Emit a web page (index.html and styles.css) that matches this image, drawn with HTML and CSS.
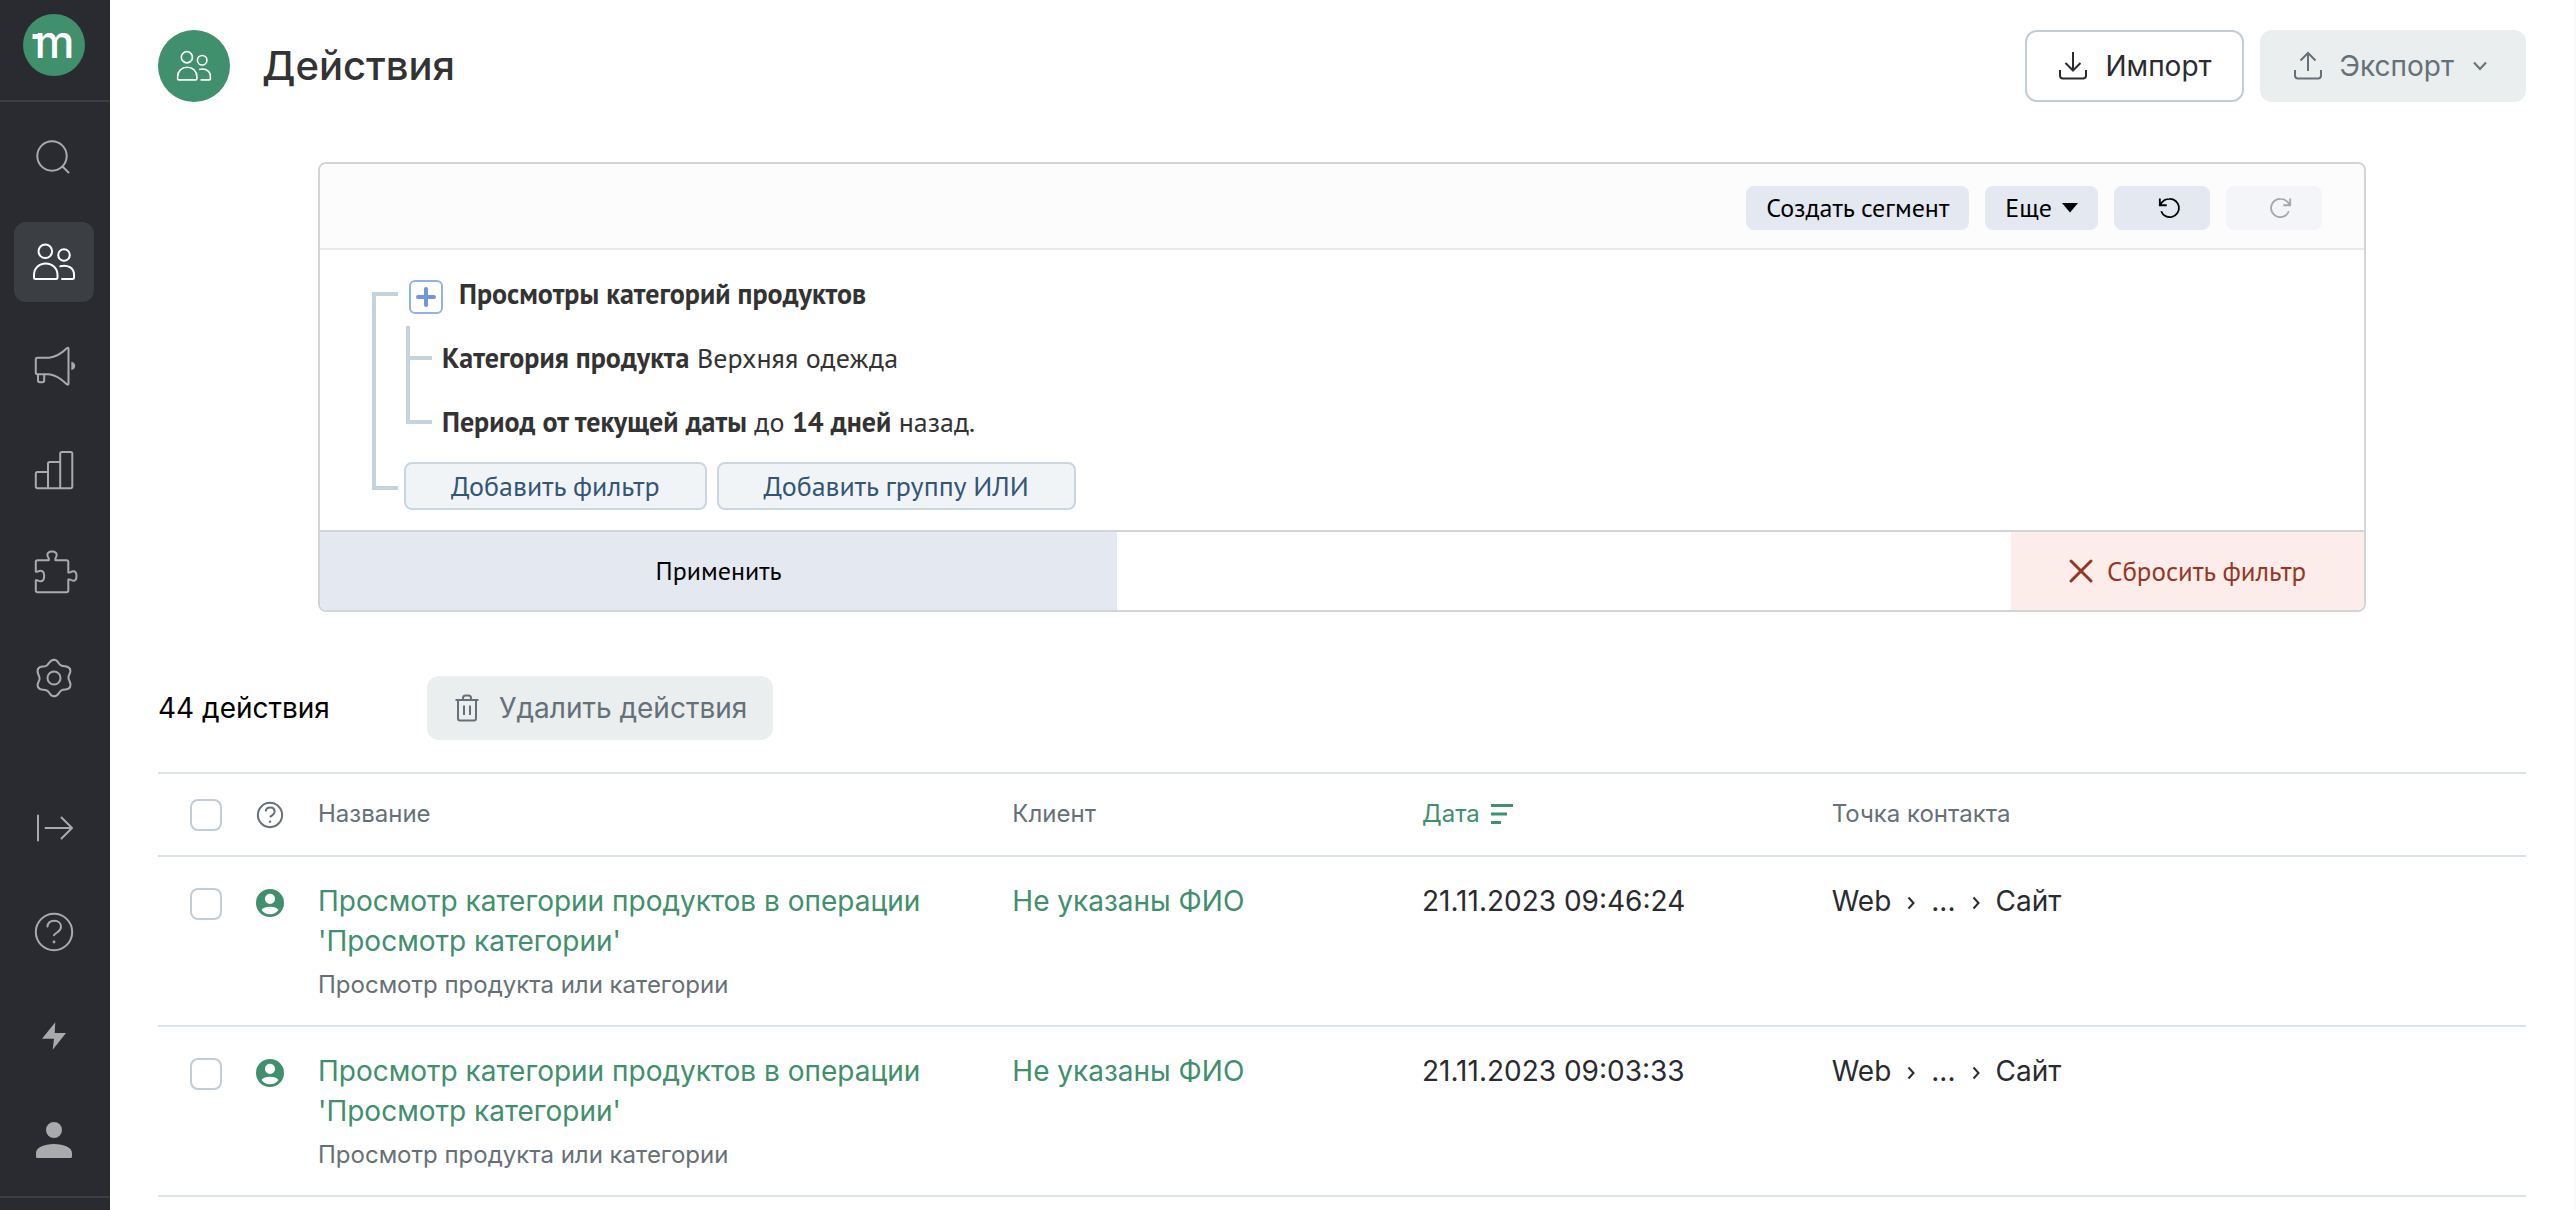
FILE: index.html
```html
<!DOCTYPE html>
<html lang="ru">
<head>
<meta charset="utf-8">
<meta name="viewport" content="width=device-width, initial-scale=1">
<title>Действия</title>
<link rel="stylesheet" href="styles.css">
</head>
<body>
<svg class="sprite" aria-hidden="true">
  <symbol id="i-users" viewBox="0 0 44 44">
    <circle cx="13.3" cy="11.3" r="6.8"/><circle cx="32" cy="15" r="5.8"/>
    <path d="M2 35C2 28.500 7 23.500 13.700 23.500S25.500 28.500 25.500 35V37.500Q25.500 39 24 39H3.500Q2 39 2 37.500Z"/>
    <path d="M28.300 26.200C35.500 24.300 42 28 42 34.500V37.500Q42 39 40.500 39H30"/>
  </symbol>
  <symbol id="i-account" viewBox="0 0 28 28">
    <path fill-rule="evenodd" d="M14 0a14 14 0 1 0 0 28a14 14 0 1 0 0-28ZM14 4.700a5 5 0 1 1 0 10.200a5 5 0 1 1 0-10.200ZM5.500 21C7 18.600 10 17.700 14 17.700S21 18.600 22.500 21C20.500 23.800 17.500 25.200 14 25.200S7.500 23.800 5.500 21Z"/>
  </symbol>
</svg>
<div class="app">
  <nav class="sidebar" aria-label="Главное меню">
    <a class="logo" href="#" aria-label="Главная"><svg viewBox="0 0 62 62" width="62" height="62"><circle cx="31" cy="31" r="31"/><rect x="9.500" y="20" width="6" height="5"/><text x="31.500" y="44" text-anchor="middle">m</text></svg></a>
    <div class="nav-group">
      <a class="nav-item" href="#" aria-label="Поиск"><svg viewBox="0 0 44 44"><circle cx="20" cy="20" r="14.700"/><path d="M30.500 30.500L36.500 36.500"/></svg></a>
      <a class="nav-item active" href="#" aria-label="Клиенты"><svg><use href="#i-users"/></svg></a>
      <a class="nav-item" href="#" aria-label="Кампании"><svg viewBox="0 0 44 44"><path d="M5.500 13.800H17C25 13 31 8 34.800 4.300Q36.500 2.800 36.500 5V39.500Q36.500 41.500 34.800 40.200C31 36.500 25 31 17 30.200H5.500Q3.800 30.200 3.800 28.500V15.500Q3.800 13.800 5.500 13.800ZM6 30.500V36.500Q6 38.300 8 38.300H10.300Q12.200 38.300 12.200 36.500V31"/><path class="solid" d="M39.300 17.800C44.500 18.500 44.500 25.300 39.300 26Z"/></svg></a>
      <a class="nav-item" href="#" aria-label="Отчёты"><svg viewBox="0 0 44 44"><path d="M16 40.300H5.500Q3.800 40.300 3.800 38.500V26Q3.800 24 5.500 24H16M28.200 40.300H16V15.500Q16 14 17.700 14H28.200M28.200 40.300V5.500Q28.200 4 30 4H38.500Q40.300 4 40.300 5.500V38.500Q40.300 40.300 38.500 40.300H16"/></svg></a>
      <a class="nav-item" href="#" aria-label="Интеграции"><svg viewBox="0 0 44 44"><path d="M5.500 8.300H16.800V6.500C13 .500 18-.400 20-.400S27 .500 23.400 6.500V8.300H34.500Q36.300 8.300 36.300 10.100V20.500H38C44 16.800 44.500 22 44.500 24S44 31.200 38 27.500H36.300V38.500Q36.300 40.300 34.500 40.300H5.500Q3.800 40.300 3.800 38.500V28.300H5.500C11.500 31.500 12.200 26 12.200 24S11.500 16.500 5.500 19.700H3.800V10.100Q3.800 8.300 5.500 8.300Z"/></svg></a>
      <a class="nav-item" href="#" aria-label="Настройки"><svg viewBox="-22 -22 44 44"><circle r="6.500"/><path id="lobe" d="M0-18.300C4.500-18.300 3.600-14 7.200-12.500S13.700-12.900 15.850-9.150"/><use href="#lobe" transform="rotate(60)"/><use href="#lobe" transform="rotate(120)"/><use href="#lobe" transform="rotate(180)"/><use href="#lobe" transform="rotate(240)"/><use href="#lobe" transform="rotate(300)"/></svg></a>
    </div>
    <div class="nav-group nav-bottom">
      <a class="nav-item" href="#" aria-label="Развернуть"><svg viewBox="0 0 44 44"><path d="M6 9.500V34.500M13.500 22H40M29.500 11.500L40 22L29.500 32.500"/></svg></a>
      <a class="nav-item" href="#" aria-label="Помощь"><svg viewBox="0 0 44 44"><circle cx="22" cy="22" r="18.200"/><path d="M15.500 16.500C15.800 12.800 18.500 10.700 22.300 10.700C26.300 10.700 29 13.200 29 16.700C29 21.500 24.500 22 22 25.200"/><circle class="dot" cx="22" cy="32" r="1.400"/></svg></a>
      <a class="nav-item" href="#" aria-label="Новости"><svg viewBox="0 0 44 44"><path class="solid" d="M23.300 8.300L10 24.700H22L20.700 35.700L34 19H22.700Z"/></svg></a>
      <a class="nav-item" href="#" aria-label="Профиль"><svg viewBox="0 0 44 44"><path class="solid" d="M22 4a8 8 0 1 0 0 16a8 8 0 1 0 0-16ZM4 35C4 29.500 12 26 22 26S40 29.500 40 35V38.500Q40 40 38.500 40H5.500Q4 40 4 38.500Z"/></svg></a>
    </div>
  </nav>

  <main class="main">
    <header class="page-head">
      <span class="page-icon"><svg><use href="#i-users"/></svg></span>
      <h1>Действия</h1>
      <div class="head-actions">
        <button class="btn btn-outline" type="button"><svg class="line" viewBox="0 0 28 28"><path d="M1 18V23.500Q1 26.500 4 26.500H24Q27 26.500 27 23.500V18M14 0V18M6.500 11L14 18.500L21.500 11"/></svg>Импорт</button>
        <button class="btn btn-muted btn-export" type="button"><svg class="line" viewBox="0 0 28 28"><path d="M1 18V23.500Q1 26.500 4 26.500H24Q27 26.500 27 23.500V18M14 19V1M6.500 8.500L14 1L21.500 8.500"/></svg>Экспорт<svg class="chevron" viewBox="0 0 16 16"><path d="M2 4.500L8 11L14 4.500"/></svg></button>
      </div>
    </header>

    <section class="filter" aria-label="Фильтр">
      <div class="filter-bar">
        <button class="tool" type="button">Создать сегмент</button>
        <button class="tool" type="button">Еще<svg class="caret" viewBox="0 0 16 10"><path d="M0 0H16L8 9.500Z"/></svg></button>
        <button class="tool tool-icon" type="button" aria-label="Отменить"><svg viewBox="0 0 24 24"><path d="M2 1.500V9H9.500M2.500 8.500C5 4 8.500 2 12.500 2A10 10 0 1 1 3.500 15.500"/></svg></button>
        <button class="tool tool-icon" type="button" aria-label="Повторить" disabled><svg viewBox="0 0 24 24"><path d="M22 1.500V9H14.500M21.500 8.500C19 4 15.500 2 11.500 2A10 10 0 1 0 20.500 15.500"/></svg></button>
      </div>
      <div class="filter-body">
        <div class="bracket"></div>
        <div class="filter-tree">
          <div class="rule rule-main">
            <button class="plus" type="button" aria-label="Развернуть условие"><svg viewBox="0 0 20 20"><path d="M10 2V18M2 10H18"/></svg></button>
            <b>Просмотры категорий продуктов</b>
          </div>
          <div class="rule-children">
            <div class="branches"><span class="branch branch-first"></span><span class="branch"></span></div>
            <div>
              <p class="rule"><span><b>Категория продукта</b> Верхняя одежда</span></p>
              <p class="rule"><span><b>Период от текущей даты</b> до <b>14 дней</b> назад.</span></p>
            </div>
          </div>
          <div class="add-row">
            <button class="add" type="button">Добавить фильтр</button>
            <button class="add" type="button">Добавить группу ИЛИ</button>
          </div>
        </div>
      </div>
      <div class="filter-foot">
        <button class="apply" type="button">Применить</button>
        <button class="reset" type="button"><svg viewBox="0 0 24 24"><path d="M2 2L22 22M22 2L2 22"/></svg>Сбросить фильтр</button>
      </div>
    </section>

    <div class="summary">
      <span class="count">44 действия</span>
      <button class="btn btn-muted btn-delete" type="button"><svg class="line" viewBox="0 0 28 28"><path d="M2.500 6H25.500M5 6V24.500Q5 26.500 7 26.500H21Q23 26.500 23 24.500V6M10 6V4Q10 1.500 12.500 1.500H15.500Q18 1.500 18 4V6M11 11.500V21M17 11.500V21"/></svg>Удалить действия</button>
    </div>

    <table class="actions">
      <colgroup><col class="c-check"><col class="c-icon"><col><col class="c-mid"><col class="c-mid"><col></colgroup>
      <thead>
        <tr>
          <th><input type="checkbox" aria-label="Выбрать все"></th>
          <th><svg class="help" viewBox="1 1 42 42"><circle cx="22" cy="22" r="18.200"/><path d="M15.500 16.500C15.800 12.800 18.500 10.700 22.300 10.700C26.300 10.700 29 13.200 29 16.700C29 21.500 24.500 22 22 25.200"/><circle class="dot" cx="22" cy="32" r="1.800"/></svg></th>
          <th>Название</th>
          <th>Клиент</th>
          <th class="sorted">Дата<svg class="sort" viewBox="0 0 24 20"><path d="M1 1.500H23M1 10H17M1 18.500H11"/></svg></th>
          <th>Точка контакта</th>
        </tr>
      </thead>
      <tbody>
        <tr>
          <td><input type="checkbox" aria-label="Выбрать действие"></td>
          <td><svg class="account"><use href="#i-account"/></svg></td>
          <td><a href="#">Просмотр категории продуктов в операции<br>'Просмотр категории'</a><span class="note">Просмотр продукта или категории</span></td>
          <td><a href="#">Не указаны ФИО</a></td>
          <td>21.11.2023 09:46:24</td>
          <td><span class="path"><span>Web</span><svg viewBox="0 0 12 14"><path d="M3.500 1.500L8.500 7L3.500 12.500"/></svg><span>...</span><svg viewBox="0 0 12 14"><path d="M3.500 1.500L8.500 7L3.500 12.500"/></svg><span>Сайт</span></span></td>
        </tr>
        <tr>
          <td><input type="checkbox" aria-label="Выбрать действие"></td>
          <td><svg class="account"><use href="#i-account"/></svg></td>
          <td><a href="#">Просмотр категории продуктов в операции<br>'Просмотр категории'</a><span class="note">Просмотр продукта или категории</span></td>
          <td><a href="#">Не указаны ФИО</a></td>
          <td>21.11.2023 09:03:33</td>
          <td><span class="path"><span>Web</span><svg viewBox="0 0 12 14"><path d="M3.500 1.500L8.500 7L3.500 12.500"/></svg><span>...</span><svg viewBox="0 0 12 14"><path d="M3.500 1.500L8.500 7L3.500 12.500"/></svg><span>Сайт</span></span></td>
        </tr>
      </tbody>
    </table>
  </main>
</div>
</body>
</html>
```
FILE: styles.css
```css
* { box-sizing: border-box; }
body {
  margin: 0;
  background: #fff;
  color: #2a2b30;
  font: 28px/40px Inter, sans-serif;
}
button { font: inherit; color: inherit; border: 0; padding: 0; margin: 0; background: none; white-space: nowrap; cursor: pointer; }
a { color: #408f6d; text-decoration: none; }
svg { flex: none; overflow: visible; }
.sprite { position: absolute; width: 0; height: 0; }

.app { display: flex; min-height: 100vh; border-right: 2px solid #fafafa; }

/* Sidebar */
.sidebar { display: flex; flex-direction: column; flex: none; width: 110px; background: #2a2b30; padding-bottom: 12px; }
.logo { display: block; height: 102px; padding: 14px 0 0 23px; border-bottom: 2px solid #3b3e42; }
.logo svg { display: block; fill: #408f6d; }
.logo rect, .logo text { fill: #fff; }
.logo text { font: 500 45px Inter, sans-serif; }
.nav-group { display: flex; flex-direction: column; gap: 24px; padding: 16px 0 0 14px; }
.nav-bottom { flex: 1; padding-top: 70px; border-bottom: 2px solid #3b3e42; }
.nav-item { display: flex; align-items: center; justify-content: center; width: 80px; height: 80px; border-radius: 12px; color: #a9aaac; }
.nav-item.active { background: #3b3e42; color: #fff; }
.nav-item svg { width: 44px; height: 44px; fill: none; stroke: currentColor; stroke-width: 2; stroke-linecap: round; stroke-linejoin: round; }
.nav-item .solid, .dot { fill: currentColor; stroke: none; }

/* Header */
.main { flex: 1; min-width: 0; padding: 30px 48px 0; }
.page-head { display: flex; align-items: center; gap: 32px; }
.page-icon { display: flex; align-items: center; justify-content: center; width: 72px; height: 72px; border-radius: 50%; background: #408f6d; }
.page-icon svg { width: 36px; height: 36px; fill: none; stroke: #fff; stroke-width: 2; }
h1 { margin: 0; font-size: 40px; line-height: 48px; font-weight: 500; color: #333; }
.head-actions { display: flex; gap: 16px; margin-left: auto; }
.btn { display: flex; align-items: center; height: 72px; padding: 0 30px 0 32px; gap: 18px; border-radius: 12px; }
.btn-outline { border: 2px solid #c1ced8; }
.btn-muted { background: #eaeeef; color: #667078; }
.btn-export { padding: 0 38px 0 34px; }
.line { width: 28px; height: 28px; fill: none; stroke: currentColor; stroke-width: 2; }
.chevron { width: 16px; height: 16px; fill: none; stroke: currentColor; stroke-width: 2; }

/* Filter panel */
.filter { margin: 60px 160px 64px; border: 2px solid #d3d4d5; border-radius: 8px; overflow: hidden; color: #333; font: 28px/36px "PT Sans", "Noto Sans", sans-serif; }
.filter-bar { display: flex; justify-content: flex-end; gap: 16px; padding: 22px 42px 18px; background: #fcfcfc; border-bottom: 2px solid #e4eaee; }
.tool { display: flex; align-items: center; justify-content: center; gap: 10px; height: 44px; padding: 0 20px; border-radius: 8px; background: #e4e8f0; color: #000; font-size: 26px; }
.tool-icon { width: 96px; padding-left: 34px; }
.tool svg { width: 22px; height: 22px; fill: none; stroke: currentColor; stroke-width: 2; }
.tool .caret { width: 16px; height: 10px; fill: currentColor; stroke: none; }
.tool:disabled { background: #f4f5f8; color: #a5a6a8; }
.filter-body { display: flex; gap: 6px; padding: 12px 20px 20px 52px; }
.bracket { width: 26px; margin: 30px 0 20px; border: 4px solid #c5d3df; border-right: 0; }
.rule { display: flex; align-items: center; height: 64px; margin: 0; }
.rule-main { gap: 16px; padding-left: 5px; }
.plus { display: flex; align-items: center; justify-content: center; width: 34px; height: 34px; margin-top: 6px; border: 2px solid #95b2e8; border-radius: 6px; }
.plus svg { width: 20px; height: 20px; stroke: #7196db; stroke-width: 4; stroke-linecap: round; }
.rule-children { display: flex; gap: 10px; padding-left: 2px; }
.branches { width: 26px; }
.branch { display: block; height: 64px; border: solid #c5d3df; border-width: 0 0 4px 4px; }
.branch-first { height: 34px; }
.add-row { display: flex; gap: 10px; margin-top: 8px; }
.add { height: 48px; padding: 0 45px; border: 2px solid #c8d7e2; border-radius: 8px; background: #f1f4f7; color: #335577; }
.filter-foot { display: flex; justify-content: space-between; height: 80px; border-top: 2px solid #d3d4d5; }
.apply { width: 39%; background: #e4e8f0; color: #000; font-size: 26px; }
.reset { display: flex; align-items: center; justify-content: center; gap: 14px; padding: 0 58px; background: #fcedea; color: #963726; font-size: 27px; }
.reset svg { width: 24px; height: 24px; stroke: currentColor; stroke-width: 3; stroke-linecap: round; }

/* Summary */
.summary { display: flex; align-items: center; gap: 97px; margin-bottom: 32px; }
.count { color: #000; }
.btn-delete { height: 64px; padding: 0 26px; }

/* Table */
.actions { width: 100%; table-layout: fixed; border-collapse: separate; border-spacing: 0; border-top: 2px solid #dbe2e8; }
.c-check { width: 98px; }
.c-icon { width: 62px; }
.c-mid { width: 17.3%; }
.actions th, .actions td { padding: 0; text-align: left; vertical-align: top; border-bottom: 2px solid #dbe2e8; }
.actions th { height: 83px; padding-top: 22px; font-size: 24px; line-height: 36px; font-weight: 400; color: #667078; }
.actions td { height: 170px; padding-top: 24px; }
.actions input { appearance: none; display: block; width: 32px; height: 32px; margin: 3px 0 0 32px; border: 2px solid #c1ced8; border-radius: 8px; background: #fff; }
.actions td input { margin-top: 7px; }
.actions .sorted { color: #408f6d; }
.sort { width: 24px; height: 20px; margin-left: 10px; vertical-align: -2px; fill: none; stroke: currentColor; stroke-width: 3; }
.help { display: block; width: 28px; height: 28px; margin-top: 5px; fill: none; stroke: currentColor; stroke-width: 3; }
.account { display: block; width: 28px; height: 28px; margin-top: 8px; fill: #408f6d; }
.note { display: block; margin-top: 4px; font-size: 24px; color: #667078; }
.path { display: flex; align-items: center; gap: 14px; }
.path svg { width: 12px; height: 14px; margin-top: 4px; fill: none; stroke: currentColor; stroke-width: 2; }
```
